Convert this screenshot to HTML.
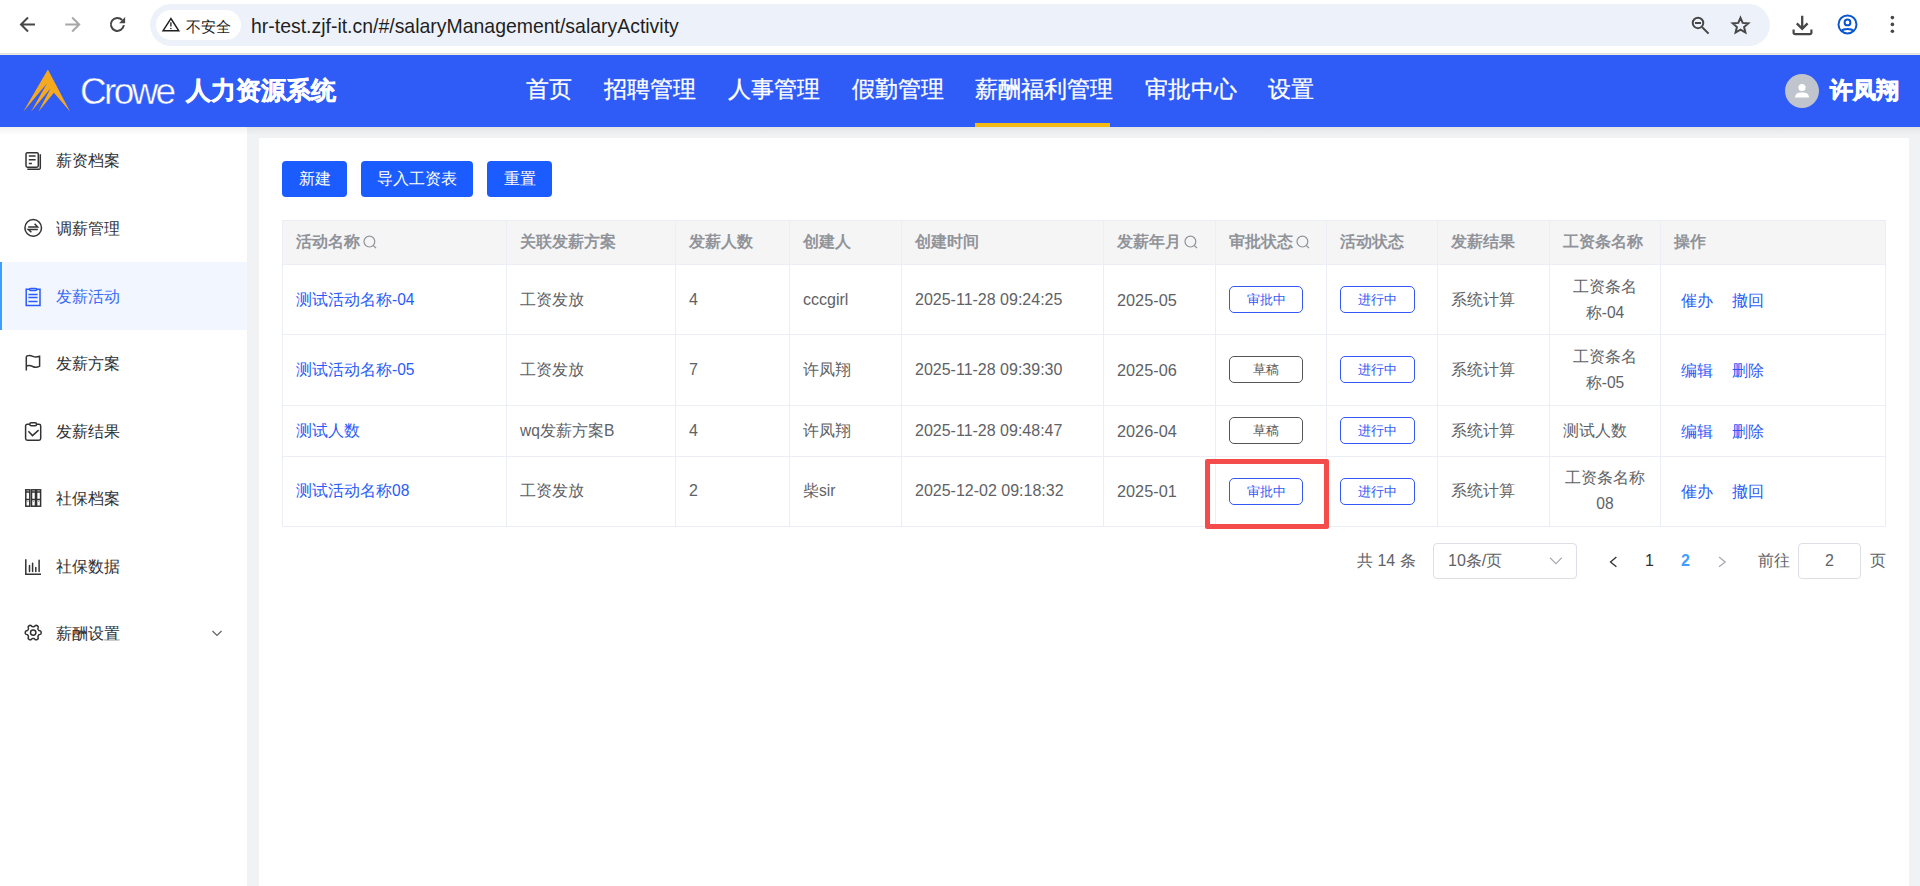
<!DOCTYPE html>
<html><head><meta charset="utf-8"><style>
*{box-sizing:border-box;margin:0;padding:0}
html,body{width:1920px;height:886px;overflow:hidden;background:#fff;font-family:"Liberation Sans",sans-serif}
.a{position:absolute;white-space:nowrap}
svg{position:absolute;overflow:visible}
</style></head><body>
<div class="a" style="left:0;top:0;width:1920px;height:53px;background:#fff"></div>
<div class="a" style="left:0;top:53px;width:1920px;height:1px;background:#dfe1df"></div>
<div class="a" style="left:0;top:54px;width:1920px;height:1px;background:#ece9e1"></div>
<div class="a" style="left:150px;top:4px;width:1620px;height:42px;border-radius:21px;background:#edf2fa"></div>
<div class="a" style="left:156px;top:10px;width:85px;height:30px;border-radius:15px;background:#fff"></div>
<svg style="left:0;top:0" width="140" height="50"><g fill="none" stroke-width="2"><path d="M35 24.5H21.2M28 17.5L21 24.5L28 31.5" stroke="#474747"/><path d="M65.2 24.5H79M72.2 17.5L79.2 24.5L72.2 31.5" stroke="#a8a8a8"/><path d="M123.85 25.19A6.5 6.5 0 1 1 122.15 19.97" stroke="#474747"/></g><path d="M119.1 23.2L125.1 23.2L125.1 17.1Z" fill="#474747"/><g></g></svg>
<svg style="left:0;top:0" width="250" height="50"><path d="M170.9 18.5L178.8 30.8H163.0Z" fill="none" stroke="#1f1f1f" stroke-width="1.4" stroke-linejoin="miter"/><path d="M170.9 22.3V26.6" stroke="#1f1f1f" stroke-width="1.3"/><circle cx="170.9" cy="28.4" r="0.75" fill="#1f1f1f"/></svg>
<div class="a" style="left:186px;top:17px;font-size:15px;line-height:20px;color:#1f1f1f">不安全</div>
<div class="a" style="left:251px;top:13.5px;font-size:19.45px;line-height:24px;color:#1f1f1f">hr-test.zjf-it.cn/#/salaryManagement/salaryActivity</div>
<svg style="left:1660px;top:0" width="260" height="50"><g fill="none" stroke="#474747" stroke-width="2"><circle cx="38" cy="22.9" r="5.25"/><path d="M35 23H41M42.2 27.2L48.6 33.6"/><path d="M80.5 17.8L82.7 22.9L88.3 23.4L84.1 27.0L85.4 32.5L80.5 29.6L75.6 32.5L76.9 27.0L72.7 23.4L78.3 22.9Z" stroke-linejoin="miter"/><path d="M142.2 15.8V29M136.8 23.4L142.2 28.8L147.6 23.4" stroke-width="2.3"/><path d="M133.6 29.6V32.6Q133.6 34.2 135.2 34.2H149.8Q151.4 34.2 151.4 32.6V29.6" stroke-width="2.2"/></g><g fill="none" stroke="#0b57d0" stroke-width="2"><circle cx="187.5" cy="24.4" r="9"/><circle cx="187.5" cy="22.4" r="2.9"/><path d="M181.2 31.2C183.5 28.4 191.5 28.4 193.8 31.2"/></g><g fill="#474747"><circle cx="232.4" cy="17.6" r="1.8"/><circle cx="232.4" cy="24.4" r="1.8"/><circle cx="232.4" cy="31.2" r="1.8"/></g></svg>
<div class="a" style="left:0;top:55px;width:1920px;height:72px;background:#2f5bf6"></div>
<svg style="left:15px;top:62px" width="70" height="56"><path d="M32.9 7.6L55.2 49.8L38.9 30.8L23.3 49.8L35.5 26.5L16 49.8L31.9 21.4L8.2 49.8Z" fill="#f5a91f"/></svg>
<div class="a" style="left:80px;top:72px;font-size:37px;line-height:40px;color:#fff;letter-spacing:-2.7px;-webkit-text-stroke:0.45px #2f5bf6;paint-order:normal">Crowe</div>
<div class="a" style="left:186px;top:77px;font-size:24.6px;line-height:28px;color:#fff;font-weight:bold;-webkit-text-stroke:0.5px #fff">人力资源系统</div>
<div class="a" style="left:526px;top:75px;font-size:22.5px;line-height:30px;color:#fff;-webkit-text-stroke:0.3px #fff">首页</div>
<div class="a" style="left:604px;top:75px;font-size:22.5px;line-height:30px;color:#fff;-webkit-text-stroke:0.3px #fff">招聘管理</div>
<div class="a" style="left:728px;top:75px;font-size:22.5px;line-height:30px;color:#fff;-webkit-text-stroke:0.3px #fff">人事管理</div>
<div class="a" style="left:852px;top:75px;font-size:22.5px;line-height:30px;color:#fff;-webkit-text-stroke:0.3px #fff">假勤管理</div>
<div class="a" style="left:975px;top:75px;font-size:22.5px;line-height:30px;color:#fff;-webkit-text-stroke:0.3px #fff">薪酬福利管理</div>
<div class="a" style="left:1145px;top:75px;font-size:22.5px;line-height:30px;color:#fff;-webkit-text-stroke:0.3px #fff">审批中心</div>
<div class="a" style="left:1268px;top:75px;font-size:22.5px;line-height:30px;color:#fff;-webkit-text-stroke:0.3px #fff">设置</div>
<div class="a" style="left:975px;top:123px;width:135px;height:4px;background:#f5b914"></div>
<div class="a" style="left:1785px;top:74px;width:34px;height:34px;border-radius:17px;background:#c0c4cc"></div>
<svg style="left:1785px;top:74px" width="34" height="34"><circle cx="17" cy="13.5" r="3.6" fill="#fff"/><path d="M10 23.5C10 19.8 13 18.5 17 18.5C21 18.5 24 19.8 24 23.5Z" fill="#fff"/></svg>
<div class="a" style="left:1830px;top:77px;font-size:22.6px;line-height:28px;color:#fff;font-weight:bold;-webkit-text-stroke:0.8px #fff">许凤翔</div>
<div class="a" style="left:0;top:127px;width:247px;height:759px;background:#fff"></div>
<div class="a" style="left:0;top:262px;width:247px;height:68px;background:#f2f7ff"></div>
<div class="a" style="left:0;top:262px;width:2px;height:68px;background:#409eff"></div>
<svg style="left:18px;top:145.0px" width="30" height="30"><g fill="none" stroke="#333" stroke-width="1.5"><rect x="8" y="7.8" width="12.3" height="14.4" rx="1.4"/><path d="M9.3 24.2H21a1.3 1.3 0 0 0 1.3-1.3V9.3"/><path d="M10.8 11H17.6M10.8 14.8H17.6M10.8 18.5H13.9"/></g></svg>
<div class="a" style="left:56px;top:151.0px;font-size:16px;line-height:20px;color:#303133">薪资档案</div>
<svg style="left:18px;top:213.0px" width="30" height="30"><g fill="none" stroke="#333" stroke-width="1.5"><circle cx="15.2" cy="14.9" r="8.3"/><path d="M10.2 13.9H19.6L16.6 10.7M19.8 16.4H10.2L13.4 19.3"/></g></svg>
<div class="a" style="left:56px;top:219.0px;font-size:16px;line-height:20px;color:#303133">调薪管理</div>
<svg style="left:18px;top:280.5px" width="30" height="30"><g fill="none" stroke="#2a5bff" stroke-width="1.5"><path d="M11.3 8.2H8.2V24.6H22V8.2H18.8"/><rect x="11.5" y="7.4" width="7.2" height="2.2" rx="1"/><path d="M10.4 13.4H19.6M10.4 16.6H19.6M10.4 20.5H19.6"/></g></svg>
<div class="a" style="left:56px;top:286.5px;font-size:16px;line-height:20px;color:#3b6af5">发薪活动</div>
<svg style="left:18px;top:348.0px" width="30" height="30"><g fill="none" stroke="#333" stroke-width="1.5"><path d="M8.3 22.4V9.2C8.3 8 9.5 7.6 11 7.6C14.5 7.4 15 9.2 18 9C19.8 8.9 20.6 8.5 21.6 8.3V18.2C20.6 18.7 19.8 19.2 18 19.3C15 19.5 14.5 17.6 11 17.6C9.5 17.6 8.8 17.9 8.3 18.2"/></g></svg>
<div class="a" style="left:56px;top:354.0px;font-size:16px;line-height:20px;color:#303133">发薪方案</div>
<svg style="left:18px;top:415.5px" width="30" height="30"><g fill="none" stroke="#333" stroke-width="1.5"><path d="M11.8 8.3H9.3C8.3 8.3 7.6 9 7.6 10V22.6C7.6 23.6 8.3 24.3 9.3 24.3H21C22 24.3 22.7 23.6 22.7 22.6V10C22.7 9 22 8.3 21 8.3H18.6"/><rect x="11.8" y="6.8" width="6.8" height="2.9" rx="1.45"/><path d="M10.4 15.3L14.5 19.6L20.6 14.1"/></g></svg>
<div class="a" style="left:56px;top:421.5px;font-size:16px;line-height:20px;color:#303133">发薪结果</div>
<svg style="left:18px;top:483.0px" width="30" height="30"><g fill="none" stroke="#333" stroke-width="1.5"><rect x="7.8" y="6.8" width="4" height="16.4"/><rect x="13.5" y="6.8" width="4" height="16.4"/><rect x="18.6" y="6.8" width="4" height="16.4"/><path d="M7.8 9H11.8M13.5 9H17.5M18.6 9H22.6M7.8 16.6H11.8M13.5 16.6H17.5M18.6 16.6H22.6"/><path d="M9.8 18.6V18.9M15.5 18.6V18.9M20.6 18.6V18.9" stroke-width="1.1"/></g></svg>
<div class="a" style="left:56px;top:489.0px;font-size:16px;line-height:20px;color:#303133">社保档案</div>
<svg style="left:18px;top:550.5px" width="30" height="30"><g fill="none" stroke="#333" stroke-width="1.5"><path d="M7.8 8.2V23.3H23"/><path d="M11.5 14.6V20.4M14.6 12.3V20.4M17.8 16.4V20.4M21.1 9.3V20.4" stroke-linecap="round"/></g></svg>
<div class="a" style="left:56px;top:556.5px;font-size:16px;line-height:20px;color:#303133">社保数据</div>
<svg style="left:18px;top:618.0px" width="30" height="30"><g fill="none" stroke="#333" stroke-width="1.5"><path d="M23.15 14.60 L23.12 14.08 L23.00 13.57 L22.67 13.11 L21.91 12.80 L21.15 12.58 L20.77 12.29 L20.55 11.96 L20.35 11.62 L20.16 11.29 L19.98 10.93 L19.92 10.46 L20.11 9.69 L20.22 8.87 L19.99 8.36 L19.61 8.00 L19.18 7.72 L18.71 7.48 L18.21 7.33 L17.65 7.39 L17.00 7.89 L16.43 8.44 L15.99 8.62 L15.59 8.65 L15.20 8.65 L14.81 8.65 L14.41 8.62 L13.97 8.44 L13.40 7.89 L12.75 7.39 L12.19 7.33 L11.69 7.48 L11.23 7.72 L10.79 8.00 L10.41 8.36 L10.18 8.87 L10.29 9.69 L10.48 10.46 L10.42 10.93 L10.24 11.29 L10.05 11.62 L9.85 11.96 L9.63 12.29 L9.25 12.58 L8.49 12.80 L7.73 13.11 L7.40 13.57 L7.28 14.08 L7.25 14.60 L7.28 15.12 L7.40 15.63 L7.73 16.09 L8.49 16.40 L9.25 16.62 L9.63 16.91 L9.85 17.24 L10.05 17.57 L10.24 17.91 L10.42 18.27 L10.48 18.74 L10.29 19.51 L10.18 20.33 L10.41 20.84 L10.79 21.20 L11.22 21.48 L11.69 21.72 L12.19 21.87 L12.75 21.81 L13.40 21.31 L13.97 20.76 L14.41 20.58 L14.81 20.55 L15.20 20.55 L15.59 20.55 L15.99 20.58 L16.43 20.76 L17.00 21.31 L17.65 21.81 L18.21 21.87 L18.71 21.72 L19.18 21.48 L19.61 21.20 L19.99 20.84 L20.22 20.33 L20.11 19.51 L19.92 18.74 L19.98 18.27 L20.16 17.91 L20.35 17.58 L20.55 17.24 L20.77 16.91 L21.15 16.62 L21.91 16.40 L22.67 16.09 L23.00 15.63 L23.12 15.12Z" stroke-linejoin="round"/><circle cx="15.2" cy="14.6" r="2.7"/></g></svg>
<div class="a" style="left:56px;top:624.0px;font-size:16px;line-height:20px;color:#303133">薪酬设置</div>
<svg style="left:0;top:0" width="247" height="700"><path d="M212.5 631L217 635.5L221.5 631" fill="none" stroke="#606266" stroke-width="1.2"/></svg>
<div class="a" style="left:247px;top:127px;width:1673px;height:759px;background:#f1f2f4"></div>
<div class="a" style="left:0;top:127px;width:1920px;height:8px;background:linear-gradient(rgba(0,0,0,0.06),rgba(0,0,0,0))"></div>
<div class="a" style="left:259px;top:138px;width:1650px;height:748px;background:#fff"></div>
<div class="a" style="left:282px;top:161px;width:65px;height:36px;border-radius:4px;background:#1a5cff;color:#fff;font-size:15.6px;line-height:36px;text-align:center">新建</div>
<div class="a" style="left:361px;top:161px;width:112px;height:36px;border-radius:4px;background:#1a5cff;color:#fff;font-size:15.6px;line-height:36px;text-align:center">导入工资表</div>
<div class="a" style="left:487px;top:161px;width:65px;height:36px;border-radius:4px;background:#1a5cff;color:#fff;font-size:15.6px;line-height:36px;text-align:center">重置</div>
<div class="a" style="left:282px;top:220px;width:1603px;height:45px;background:#f5f5f5"></div>
<div class="a" style="left:282px;top:220px;width:1604px;height:1px;background:#ebeef5"></div>
<div class="a" style="left:282px;top:264px;width:1604px;height:1px;background:#ebeef5"></div>
<div class="a" style="left:282px;top:334px;width:1604px;height:1px;background:#ebeef5"></div>
<div class="a" style="left:282px;top:405px;width:1604px;height:1px;background:#ebeef5"></div>
<div class="a" style="left:282px;top:456px;width:1604px;height:1px;background:#ebeef5"></div>
<div class="a" style="left:282px;top:526px;width:1604px;height:1px;background:#ebeef5"></div>
<div class="a" style="left:282px;top:220px;width:1px;height:307px;background:#ebeef5"></div>
<div class="a" style="left:506px;top:220px;width:1px;height:307px;background:#ebeef5"></div>
<div class="a" style="left:675px;top:220px;width:1px;height:307px;background:#ebeef5"></div>
<div class="a" style="left:789px;top:220px;width:1px;height:307px;background:#ebeef5"></div>
<div class="a" style="left:901px;top:220px;width:1px;height:307px;background:#ebeef5"></div>
<div class="a" style="left:1103px;top:220px;width:1px;height:307px;background:#ebeef5"></div>
<div class="a" style="left:1215px;top:220px;width:1px;height:307px;background:#ebeef5"></div>
<div class="a" style="left:1326px;top:220px;width:1px;height:307px;background:#ebeef5"></div>
<div class="a" style="left:1437px;top:220px;width:1px;height:307px;background:#ebeef5"></div>
<div class="a" style="left:1549px;top:220px;width:1px;height:307px;background:#ebeef5"></div>
<div class="a" style="left:1660px;top:220px;width:1px;height:307px;background:#ebeef5"></div>
<div class="a" style="left:1885px;top:220px;width:1px;height:307px;background:#ebeef5"></div>
<div class="a" style="left:296px;top:232px;font-size:15.6px;line-height:20px;color:#909399;font-weight:bold">活动名称</div>
<svg style="left:363.4px;top:235px" width="16" height="16"><circle cx="6.4" cy="6.6" r="5.4" fill="none" stroke="#909399" stroke-width="1.2"/><path d="M10.3 10.5L13 13.2" stroke="#909399" stroke-width="1.2"/></svg>
<div class="a" style="left:520px;top:232px;font-size:15.6px;line-height:20px;color:#909399;font-weight:bold">关联发薪方案</div>
<div class="a" style="left:689px;top:232px;font-size:15.6px;line-height:20px;color:#909399;font-weight:bold">发薪人数</div>
<div class="a" style="left:803px;top:232px;font-size:15.6px;line-height:20px;color:#909399;font-weight:bold">创建人</div>
<div class="a" style="left:915px;top:232px;font-size:15.6px;line-height:20px;color:#909399;font-weight:bold">创建时间</div>
<div class="a" style="left:1117px;top:232px;font-size:15.6px;line-height:20px;color:#909399;font-weight:bold">发薪年月</div>
<svg style="left:1184.4px;top:235px" width="16" height="16"><circle cx="6.4" cy="6.6" r="5.4" fill="none" stroke="#909399" stroke-width="1.2"/><path d="M10.3 10.5L13 13.2" stroke="#909399" stroke-width="1.2"/></svg>
<div class="a" style="left:1229px;top:232px;font-size:15.6px;line-height:20px;color:#909399;font-weight:bold">审批状态</div>
<svg style="left:1296.4px;top:235px" width="16" height="16"><circle cx="6.4" cy="6.6" r="5.4" fill="none" stroke="#909399" stroke-width="1.2"/><path d="M10.3 10.5L13 13.2" stroke="#909399" stroke-width="1.2"/></svg>
<div class="a" style="left:1340px;top:232px;font-size:15.6px;line-height:20px;color:#909399;font-weight:bold">活动状态</div>
<div class="a" style="left:1451px;top:232px;font-size:15.6px;line-height:20px;color:#909399;font-weight:bold">发薪结果</div>
<div class="a" style="left:1563px;top:232px;font-size:15.6px;line-height:20px;color:#909399;font-weight:bold">工资条名称</div>
<div class="a" style="left:1674px;top:232px;font-size:15.6px;line-height:20px;color:#909399;font-weight:bold">操作</div>
<div class="a" style="left:296px;top:289.5px;font-size:15.6px;line-height:20px;color:#2a5bf9;">测试活动名称-04</div>
<div class="a" style="left:520px;top:289.5px;font-size:15.6px;line-height:20px;color:#606266;">工资发放</div>
<div class="a" style="left:689px;top:289.5px;font-size:16px;line-height:20px;color:#606266;">4</div>
<div class="a" style="left:803px;top:289.5px;font-size:16px;line-height:20px;color:#606266;">cccgirl</div>
<div class="a" style="left:915px;top:289.5px;font-size:16px;line-height:20px;color:#606266;">2025-11-28 09:24:25</div>
<div class="a" style="left:1117px;top:289.5px;font-size:16.3px;line-height:20px;color:#606266;">2025-05</div>
<div class="a" style="left:1229px;top:286.0px;width:74px;height:27px;border:1px solid #3358f4;border-radius:5px;color:#3358f4;font-size:13px;line-height:25px;text-align:center">审批中</div>
<div class="a" style="left:1340px;top:286.0px;width:75px;height:27px;border:1px solid #3358f4;border-radius:5px;color:#3358f4;font-size:13px;line-height:25px;text-align:center">进行中</div>
<div class="a" style="left:1451px;top:289.5px;font-size:15.6px;line-height:20px;color:#606266;">系统计算</div>
<div class="a" style="left:1550px;top:273.5px;width:110px;font-size:15.6px;line-height:26px;color:#606266;text-align:center">工资条名<br>称-04</div>
<div class="a" style="left:1681px;top:290.5px;font-size:15.6px;line-height:20px;color:#2a5bf9;">催办</div>
<div class="a" style="left:1732px;top:290.5px;font-size:15.6px;line-height:20px;color:#2a5bf9;">撤回</div>
<div class="a" style="left:296px;top:359.8px;font-size:15.6px;line-height:20px;color:#2a5bf9;">测试活动名称-05</div>
<div class="a" style="left:520px;top:359.8px;font-size:15.6px;line-height:20px;color:#606266;">工资发放</div>
<div class="a" style="left:689px;top:359.8px;font-size:16px;line-height:20px;color:#606266;">7</div>
<div class="a" style="left:803px;top:359.8px;font-size:15.6px;line-height:20px;color:#606266;">许凤翔</div>
<div class="a" style="left:915px;top:359.8px;font-size:16px;line-height:20px;color:#606266;">2025-11-28 09:39:30</div>
<div class="a" style="left:1117px;top:359.8px;font-size:16.3px;line-height:20px;color:#606266;">2025-06</div>
<div class="a" style="left:1229px;top:356.3px;width:74px;height:27px;border:1px solid #555;border-radius:5px;color:#555;font-size:13px;line-height:25px;text-align:center">草稿</div>
<div class="a" style="left:1340px;top:356.3px;width:75px;height:27px;border:1px solid #3358f4;border-radius:5px;color:#3358f4;font-size:13px;line-height:25px;text-align:center">进行中</div>
<div class="a" style="left:1451px;top:359.8px;font-size:15.6px;line-height:20px;color:#606266;">系统计算</div>
<div class="a" style="left:1550px;top:343.8px;width:110px;font-size:15.6px;line-height:26px;color:#606266;text-align:center">工资条名<br>称-05</div>
<div class="a" style="left:1681px;top:360.8px;font-size:15.6px;line-height:20px;color:#2a5bf9;">编辑</div>
<div class="a" style="left:1732px;top:360.8px;font-size:15.6px;line-height:20px;color:#2a5bf9;">删除</div>
<div class="a" style="left:296px;top:420.8px;font-size:15.6px;line-height:20px;color:#2a5bf9;">测试人数</div>
<div class="a" style="left:520px;top:420.8px;font-size:15.6px;line-height:20px;color:#606266;">wq发薪方案B</div>
<div class="a" style="left:689px;top:420.8px;font-size:16px;line-height:20px;color:#606266;">4</div>
<div class="a" style="left:803px;top:420.8px;font-size:15.6px;line-height:20px;color:#606266;">许凤翔</div>
<div class="a" style="left:915px;top:420.8px;font-size:16px;line-height:20px;color:#606266;">2025-11-28 09:48:47</div>
<div class="a" style="left:1117px;top:420.8px;font-size:16.3px;line-height:20px;color:#606266;">2026-04</div>
<div class="a" style="left:1229px;top:417.3px;width:74px;height:27px;border:1px solid #555;border-radius:5px;color:#555;font-size:13px;line-height:25px;text-align:center">草稿</div>
<div class="a" style="left:1340px;top:417.3px;width:75px;height:27px;border:1px solid #3358f4;border-radius:5px;color:#3358f4;font-size:13px;line-height:25px;text-align:center">进行中</div>
<div class="a" style="left:1451px;top:420.8px;font-size:15.6px;line-height:20px;color:#606266;">系统计算</div>
<div class="a" style="left:1563px;top:420.8px;font-size:15.6px;line-height:20px;color:#606266;">测试人数</div>
<div class="a" style="left:1681px;top:421.8px;font-size:15.6px;line-height:20px;color:#2a5bf9;">编辑</div>
<div class="a" style="left:1732px;top:421.8px;font-size:15.6px;line-height:20px;color:#2a5bf9;">删除</div>
<div class="a" style="left:296px;top:481.3px;font-size:15.6px;line-height:20px;color:#2a5bf9;">测试活动名称08</div>
<div class="a" style="left:520px;top:481.3px;font-size:15.6px;line-height:20px;color:#606266;">工资发放</div>
<div class="a" style="left:689px;top:481.3px;font-size:16px;line-height:20px;color:#606266;">2</div>
<div class="a" style="left:803px;top:481.3px;font-size:15.6px;line-height:20px;color:#606266;">柴sir</div>
<div class="a" style="left:915px;top:481.3px;font-size:16px;line-height:20px;color:#606266;">2025-12-02 09:18:32</div>
<div class="a" style="left:1117px;top:481.3px;font-size:16.3px;line-height:20px;color:#606266;">2025-01</div>
<div class="a" style="left:1229px;top:477.8px;width:74px;height:27px;border:1px solid #3358f4;border-radius:5px;color:#3358f4;font-size:13px;line-height:25px;text-align:center">审批中</div>
<div class="a" style="left:1340px;top:477.8px;width:75px;height:27px;border:1px solid #3358f4;border-radius:5px;color:#3358f4;font-size:13px;line-height:25px;text-align:center">进行中</div>
<div class="a" style="left:1451px;top:481.3px;font-size:15.6px;line-height:20px;color:#606266;">系统计算</div>
<div class="a" style="left:1550px;top:465.3px;width:110px;font-size:15.6px;line-height:26px;color:#606266;text-align:center">工资条名称<br>08</div>
<div class="a" style="left:1681px;top:482.3px;font-size:15.6px;line-height:20px;color:#2a5bf9;">催办</div>
<div class="a" style="left:1732px;top:482.3px;font-size:15.6px;line-height:20px;color:#2a5bf9;">撤回</div>
<div class="a" style="left:1205px;top:459px;width:124px;height:70px;border:5px solid #f44b4b;border-radius:2px"></div>
<div class="a" style="left:1357px;top:550.5px;font-size:16px;line-height:20px;color:#606266;">共 14 条</div>
<div class="a" style="left:1433px;top:543px;width:144px;height:36px;border:1px solid #dcdfe6;border-radius:4px"></div>
<div class="a" style="left:1448px;top:551.0px;font-size:16px;line-height:20px;color:#606266;">10条/页</div>
<svg style="left:1540px;top:550px" width="30" height="20"><path d="M10 7.8L15.9 13.6L21.8 7.8" fill="none" stroke="#a8abb2" stroke-width="1.2"/></svg>
<svg style="left:1600px;top:550px" width="140" height="20"><path d="M16.4 7L10.5 11.9L16.4 16.8" fill="none" stroke="#303133" stroke-width="1.3"/><path d="M119 7L125.2 11.9L119 16.8" fill="none" stroke="#a8abb2" stroke-width="1.3"/></svg>
<div class="a" style="left:1645px;top:550.5px;font-size:16px;line-height:20px;color:#303133;">1</div>
<div class="a" style="left:1681px;top:550.5px;font-size:16px;line-height:20px;color:#409eff;font-weight:bold">2</div>
<div class="a" style="left:1757.5px;top:550.5px;font-size:16px;line-height:20px;color:#606266;">前往</div>
<div class="a" style="left:1798px;top:543px;width:63px;height:36px;border:1px solid #dcdfe6;border-radius:4px"></div>
<div class="a" style="left:1825px;top:550.5px;font-size:16px;line-height:20px;color:#606266;">2</div>
<div class="a" style="left:1869.5px;top:550.5px;font-size:16px;line-height:20px;color:#606266;">页</div>
</body></html>
